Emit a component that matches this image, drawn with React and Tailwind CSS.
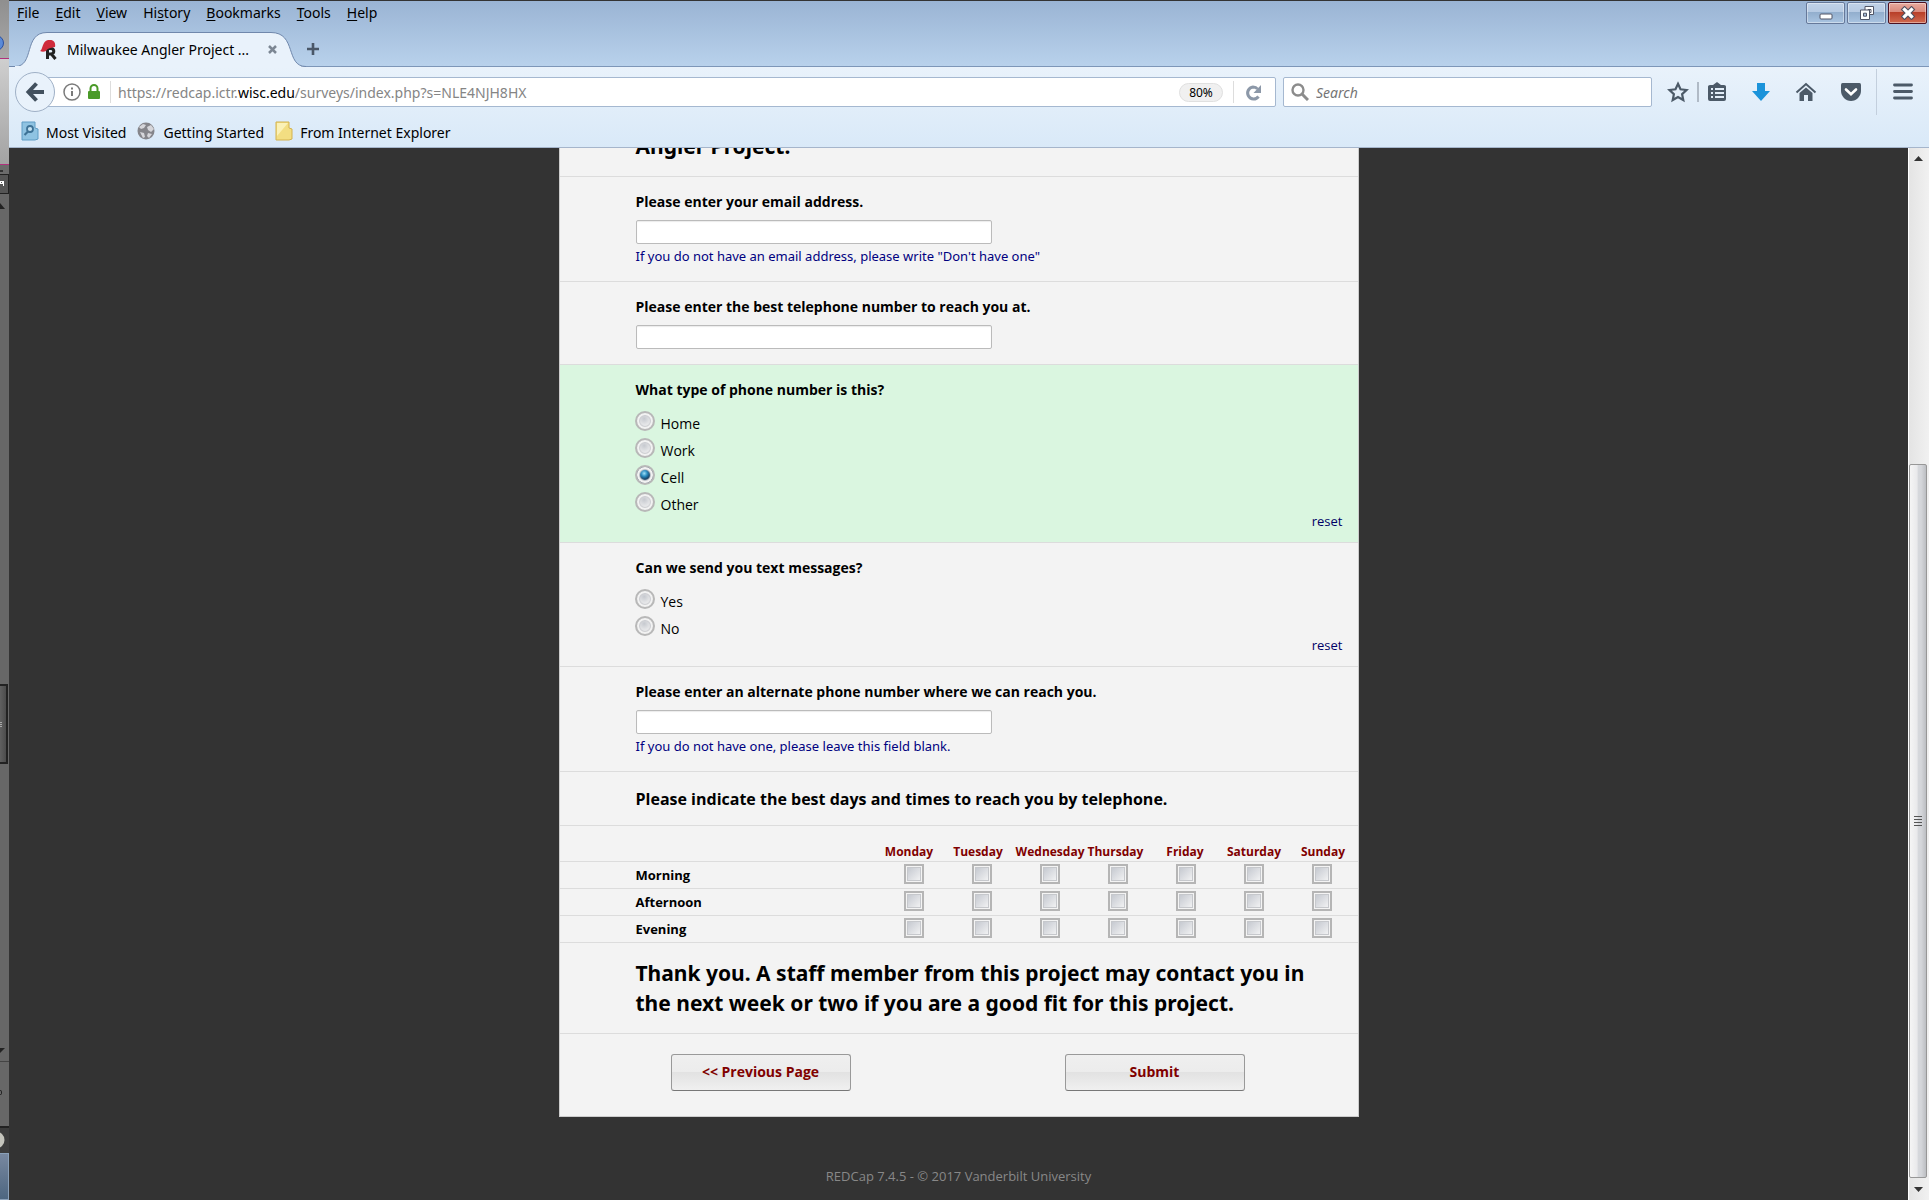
import React, { useState } from "react";

const MENU = ["File", "Edit", "View", "History", "Bookmarks", "Tools", "Help"];
const KEYS = [0, 0, 0, 2, 0, 0, 0];
const DAYS = ["Monday", "Tuesday", "Wednesday", "Thursday", "Friday", "Saturday", "Sunday"];
const HEAD_CELL = { Wednesday: "w-[72px] text-right", Thursday: "w-[66px] pl-[3px] text-left" };
const TIMES = ["Morning", "Afternoon", "Evening"];

const LINE = "border-b border-[#dcdcdc]";

function DesktopEdge() {
  return (
    <div aria-hidden="true" className="flex w-[9px] shrink-0 flex-col overflow-hidden bg-[#676767]">
      <div className="relative h-[58px] shrink-0 bg-gradient-to-b from-[#8f8f8f] to-[#a8a8a8]">
        <span className="absolute -left-3 top-[35px] size-4 rounded-full border border-[#2c50a0] bg-[#5a8ad8]" />
      </div>
      <div className="h-[107px] shrink-0 border-y border-[#b0307c] bg-gradient-to-b from-[#cfcfcf] to-[#a3a3a3]" />
      <div className="h-[9px] shrink-0 bg-[#6b6b6b] pt-[5px]"><div className="h-[2px] w-[3px] bg-[#333]" /></div>
      <div className="h-5 shrink-0 border border-l-0 border-[#222] bg-[#555] pt-[6px]">
        <svg width="5" height="6" viewBox="0 0 5 6"><path d="M0 0h4v5H3V3H0zM1 1v1h1V1z" fill="#fff" /></svg>
      </div>
      <svg className="mt-[9px] shrink-0" width="9" height="6" viewBox="0 0 9 6"><path d="M0 0L5 6H0z" fill="#222" /></svg>
      <div className="flex-1" />
      <div className="flex h-20 w-2 shrink-0 flex-col justify-center gap-px border-y-2 border-r-2 border-[#222] bg-gradient-to-r from-[#606060] to-[#4c4c4c]">
        <i className="h-px w-[2px] bg-[#aaa]" /><i className="h-px w-[2px] bg-[#aaa]" /><i className="h-px w-[2px] bg-[#aaa]" />
      </div>
      <div className="h-[284px] shrink-0" />
      <svg className="shrink-0" width="9" height="13" viewBox="0 0 9 13"><path d="M0 0H5L0 5z" fill="#222" /></svg>
      <div className="h-[65px] shrink-0 border-t border-[#444] pt-7"><div className="h-[5px] w-[2px] rounded-r border border-l-0 border-[#222]" /></div>
      <div className="h-[27px] shrink-0 border-t-2 border-[#222] bg-[#3c3c3c] pt-[3px]">
        <svg width="9" height="18" viewBox="0 0 9 18"><circle cx="-4" cy="9" r="8.500" fill="#c4c4bc" /></svg>
      </div>
      <div className="h-[47px] shrink-0 border border-l-0 border-[#8aa0b8] bg-gradient-to-b from-[#7888a0] to-[#4d6680]" />
    </div>
  );
}

function WindowButtons() {
  const base = "flex h-[22px] w-[39px] items-center justify-center rounded-[2px] border shadow-[inset_0_0_0_1px_rgba(255,255,255,0.4)]";
  const blue = base + " border-[#66799a] bg-[linear-gradient(#c0d2e8_0%,#b6cae3_45%,#92aecd_46%,#a9c4e1_100%)]";
  return (
    <div className="flex gap-[2px] pr-[2px] pt-px">
      <button aria-label="Minimize" className={blue}>
        <svg width="14" height="7" viewBox="0 0 14 7" className="mt-[7px]"><rect x="1" y="1" width="12" height="5" rx="1" fill="#fff" stroke="#505566" /></svg>
      </button>
      <button aria-label="Restore" className={blue}>
        <svg width="16" height="16" viewBox="0 0 16 16" fill="none">
          <path d="M6 1.500h8.500v8H6z" fill="#fff" stroke="#505566" /><path d="M9 4.500h3v3H9z" stroke="#505566" />
          <path d="M1.500 5h9v9.500h-9z" fill="#fff" stroke="#505566" /><path d="M4.500 8.200h3v3h-3z" fill="#a9c0dc" stroke="#505566" />
        </svg>
      </button>
      <button aria-label="Close window" className={base + " border-[#4d1020] bg-[linear-gradient(#e8aa9e_0%,#d9887a_45%,#b83e28_46%,#d06a50_100%)]"}>
        <svg width="16" height="14" viewBox="0 0 16 14"><path d="M4.500 3.500l7 7M11.500 3.500l-7 7" stroke="#50505e" strokeWidth="5.400" strokeLinecap="square" /><path d="M4.500 3.500l7 7M11.500 3.500l-7 7" stroke="#fff" strokeWidth="3.200" strokeLinecap="square" /></svg>
      </button>
    </div>
  );
}

function MenuBar() {
  return (
    <div className="flex h-[30px] items-start justify-between">
      <nav className="flex gap-4 pl-2 text-[14px] leading-[23px]">
        {MENU.map((m, i) => (
          <button key={m}>
            {m.slice(0, KEYS[i])}<span className="underline underline-offset-2">{m[KEYS[i]]}</span>{m.slice(KEYS[i] + 1)}
          </button>
        ))}
      </nav>
      <WindowButtons />
    </div>
  );
}

function TabStrip() {
  return (
    <div className="flex h-9 items-stretch shadow-[inset_0_-1px_0_#7d96b8]">
      <div className="relative flex w-[297px] items-center gap-[9px] pl-[31px] pr-[29px] pt-px">
        <svg className="absolute inset-0" width="297" height="36" viewBox="0 0 297 36" aria-hidden="true">
          <path d="M0 35.500H6C26 35.500 14 1.500 38 1.500H262C288 1.500 276 35.500 297 35.500" fill="#e9f2fb" stroke="#7088ac" />
          <path d="M6 36H292" stroke="#e9f2fb" strokeWidth="2" />
        </svg>
        <svg className="relative shrink-0" width="18" height="20" viewBox="0 0 18 20">
          <path d="M6.500 8.500h5a2.800 2.800 0 010 5.500H6.500M7.500 7v12M11 13.500l4.500 5.500" fill="none" stroke="#222" strokeWidth="3" />
          <path d="M0 11C3 10 2 1 8 0c5-1 8 2 7 7-5 1-7 1-9 4-2 1-4 1-6 0z" fill="#cf2b3c" />
        </svg>
        <span className="relative flex-1 whitespace-nowrap text-[14px]">Milwaukee Angler Project ...</span>
        <button aria-label="Close tab" className="relative">
          <svg width="9" height="9" viewBox="0 0 9 9"><path d="M1 1l7 7M8 1L1 8" stroke="#7c8794" strokeWidth="2.500" /></svg>
        </button>
      </div>
      <button aria-label="New tab">
        <svg width="14" height="14" viewBox="0 0 14 14"><path d="M7 1v12M1 7h12" stroke="#4a5768" strokeWidth="2.600" /></svg>
      </button>
    </div>
  );
}

function ToolIcons() {
  return (
    <div className="flex items-center text-[#4c5a68]">
      <button aria-label="Bookmark this page" className="ml-[15px]">
        <svg width="22" height="22" viewBox="0 0 22 22"><path d="M11 2.800l2.500 5.500 6 .7-4.400 4.100 1.200 5.900L11 16l-5.300 3 1.200-5.900L2.500 9l6-.7z" fill="none" stroke="currentColor" strokeWidth="2.200" /></svg>
      </button>
      <span className="ml-2 h-5 w-[2px] bg-[#b0bac6]" />
      <button aria-label="Bookmarks list" className="ml-[7px]">
        <svg width="22" height="22" viewBox="0 0 22 22"><path d="M2 5.500Q2 4 4 4h3l4-3 4 3h3q2 0 2 1.500V18q0 2-2 2H4q-2 0-2-2z" fill="currentColor" /><path d="M5 8h2M9 8h9M5 12h2M9 12h9M5 16h2M9 16h9" stroke="#e3eef9" strokeWidth="2" /></svg>
      </button>
      <button aria-label="Downloads" className="ml-[22px]">
        <svg width="22" height="22" viewBox="0 0 22 22"><path d="M7 2h8v8h5l-9 10L2 10h5z" fill="#1b93da" /></svg>
      </button>
      <button aria-label="Home" className="ml-[23px]">
        <svg width="22" height="22" viewBox="0 0 22 22"><path d="M1.500 11.500L11 3l9.500 8.500" fill="none" stroke="currentColor" strokeWidth="2" /><path d="M11 6.500l6.500 5.500v8H13v-6H9v6H4.500v-8z" fill="currentColor" /></svg>
      </button>
      <button aria-label="Save to Pocket" className="ml-[22px]">
        <svg width="24" height="22" viewBox="0 0 24 22"><path d="M3.500 2h17Q22 2 22 4v6c0 5-4.500 10-10 10S2 15 2 10V4q0-2 1.500-2z" fill="currentColor" /><path d="M7 8.500l5 4.800 5-4.800" fill="none" stroke="#fff" strokeWidth="2.600" strokeLinecap="round" /></svg>
      </button>
      <span className="ml-[13px] h-[46px] w-px bg-[#c3cfdd]" />
      <button aria-label="Open menu" className="ml-4 mr-4">
        <svg width="20" height="20" viewBox="0 0 20 20"><path d="M1.500 3h17M1.500 9.500h17M1.500 16h17" stroke="currentColor" strokeWidth="2.800" strokeLinecap="round" /></svg>
      </button>
    </div>
  );
}

function NavBar() {
  return (
    <div className="flex h-[50px] items-center pl-1.5">
      <button aria-label="Back" className="z-10 flex size-10 shrink-0 items-center justify-center rounded-full border border-[#9fb0c6] bg-[#e9f2fb]">
        <svg width="20" height="20" viewBox="0 0 20 20"><path d="M19 10H4M11.500 1.500L3.500 10l8 8.500" fill="none" stroke="#42505e" strokeWidth="4" /></svg>
      </button>
      <div className="-ml-2 flex h-[30px] min-w-0 flex-1 items-center rounded-r-[2px] border border-[#a5b8d0] bg-white pl-[15px]">
        <svg width="18" height="18" viewBox="0 0 18 18"><circle cx="9" cy="9" r="8" fill="none" stroke="#7a7a7a" strokeWidth="1.500" /><path d="M9 8v5M9 4.500v2" stroke="#7a7a7a" strokeWidth="2" /></svg>
        <svg className="ml-[6px]" width="14" height="16" viewBox="0 0 14 16"><path d="M3.500 8V4.500a3.500 3.500 0 017 0V8" fill="none" stroke="#4a9a28" strokeWidth="2" /><rect x="1" y="7" width="12" height="8" rx="1" fill="#4a9a28" /></svg>
        <span className="ml-[9px] h-[22px] w-px bg-[#ddd]" />
        <a href="#address" className="ml-[7px] flex-1 pt-px text-[14px] text-[#858585]">https://redcap.ictr.<span className="text-black">wisc.edu</span>/surveys/index.php?s=NLE4NJH8HX</a>
        <button className="h-[19px] w-11 rounded-full border border-[#e0e0e0] bg-[#f0f0f0] text-[12px] leading-[17px]">80%</button>
        <span className="ml-[10px] h-[22px] w-px bg-[#ddd]" />
        <button aria-label="Reload" className="ml-[11px] mr-[13px]">
          <svg width="17" height="17" viewBox="0 0 17 17"><path d="M13.500 12.500A6 6 0 118 3c2 0 3.500.6 4.500 2" fill="none" stroke="#8c98a8" strokeWidth="3" /><path d="M16 1v8H8.500z" fill="#8c98a8" /></svg>
        </button>
      </div>
      <div className="ml-[7px] flex h-[30px] w-[369px] shrink-0 items-center gap-[7px] rounded-[2px] border border-[#a5b8d0] bg-white pl-[7px]">
        <svg width="18" height="18" viewBox="0 0 18 18"><circle cx="7" cy="7" r="5.500" fill="none" stroke="#8c8c8c" strokeWidth="2.400" /><path d="M11 11l6 6" stroke="#8c8c8c" strokeWidth="3" /></svg>
        <input aria-label="Search" placeholder="Search" className="min-w-0 flex-1 pt-px text-[14px] italic outline-none placeholder:text-[#757575]" />
      </div>
      <ToolIcons />
    </div>
  );
}

function BookmarksBar() {
  return (
    <nav className="flex h-[31px] items-center gap-[11px] border-b border-[#a5b5cb] pl-3 pt-px text-[14px]">
      <a href="#most" className="flex items-center gap-[7px]">
        <svg width="18" height="20" viewBox="0 0 18 20" className="-mt-[3px]"><path d="M1 1h13v6l3 1v10l-3 1H1z" fill="#8fc3e2" stroke="#5f9cc4" /><circle cx="9" cy="8" r="3" fill="#c4e2f3" stroke="#3d7296" strokeWidth="1.800" /><path d="M7 10.500L3.500 14" stroke="#3d7296" strokeWidth="2.200" /></svg>
        Most Visited
      </a>
      <a href="#start" className="flex items-center gap-2">
        <svg width="18" height="18" viewBox="0 0 18 18" className="-mt-[3px]"><circle cx="9" cy="9" r="8.500" fill="#85858a" /><path d="M2 5l4-3 3 1-2 3-3 1zM10 5l4-2 3 4-3 3-3-2zM3 10l4 1 1 4-2 1zM11 11l4 1-3 4-2-2z" fill="#d6d6da" /></svg>
        Getting Started
      </a>
      <a href="#ie" className="flex items-center gap-[7px]">
        <svg width="18" height="20" viewBox="0 0 18 20" className="-mt-[3px]"><path d="M1 1h13v6l3 1v10l-3 1H1z" fill="#f3de82" stroke="#d3b24e" /><path d="M2 2h11L2 15z" fill="#fbf1b6" /></svg>
        From Internet Explorer
      </a>
    </nav>
  );
}

function Chrome() {
  return (
    <header className="shrink-0 border-t border-[#333] font-['Noto_Sans',sans-serif]">
      <div className="bg-gradient-to-b from-[#9ab4d4] to-[#b9d2ec]">
        <MenuBar />
        <TabStrip />
      </div>
      <div className="bg-gradient-to-b from-[#e9f2fb] to-[#d9e9f8]">
        <NavBar />
        <BookmarksBar />
      </div>
    </header>
  );
}

function Section({ children, className = "" }) {
  return <section className={"pl-[76px] pr-[15px] pt-[15px] " + LINE + " " + className}>{children}</section>;
}

function TextField({ id, label, hint }) {
  return (
    <Section className="pb-[15px]">
      <label htmlFor={id} className="block text-[14px] font-bold leading-5">{label}</label>
      <input id={id} className="mt-2 block h-6 w-[356px] rounded-[2px] border border-[#bbb] bg-white px-1 text-[14px] shadow-[inset_0_1px_1px_rgba(0,0,0,0.08)]" />
      {hint && <p className="mt-[2px] font-['Noto_Sans',sans-serif] text-[13px] leading-5 text-[#000080]">{hint}</p>}
    </Section>
  );
}

const RADIO =
  "size-5 shrink-0 appearance-none rounded-full border-2 border-[#b8b8b8] bg-[radial-gradient(circle_at_45%_35%,#c6c9cf_0,#f4f4f4_9px)] shadow-[inset_0_0_0_2px_#f2f2f2,inset_0_0_1px_3px_#cbccd0] checked:bg-[radial-gradient(circle_at_45%_40%,#9fe0f8_0,#2a8cc0_3px,#123c60_6px)]";

function RadioField({ name, label, options, initial, className = "" }) {
  const [value, setValue] = useState(initial);
  return (
    <Section className={"pb-[11px] " + className}>
      <fieldset>
        <legend className="text-[14px] font-bold leading-5">{label}</legend>
        <div className="mt-2 flex items-end justify-between">
          <div className="pb-[15px]">
            {options.map((o) => (
              <label key={o} className="flex h-[27px] items-start gap-[6px] text-[14px] leading-5">
                <input type="radio" name={name} checked={value === o} onChange={() => setValue(o)} className={"-ml-px mt-[3px] " + RADIO} />
                <span className="pt-[6px]">{o}</span>
              </label>
            ))}
          </div>
          <button type="button" onClick={() => setValue(null)} className="text-[13px] leading-5 text-[#000066]">reset</button>
        </div>
      </fieldset>
    </Section>
  );
}

function Availability() {
  return (
    <table className="block text-[12px] font-bold leading-[18px]">
      <thead className="block">
        <tr className={"flex h-9 items-end justify-end " + LINE}>
          {DAYS.map((d) => (
            <th key={d} scope="col" className={"whitespace-nowrap text-[#800000] " + (HEAD_CELL[d] || "w-[69px] text-center")}>{d}</th>
          ))}
        </tr>
      </thead>
      <tbody className="block">
        {TIMES.map((t) => (
          <tr key={t} className={"flex h-[27px] items-center pl-[76px] pr-[2px] " + LINE}>
            <th scope="row" className="flex-1 text-left text-[13px]">{t}</th>
            {DAYS.map((d) => (
              <td key={d} className="flex w-[68px] justify-center pb-[2px]">
                <input type="checkbox" aria-label={t + " " + d} className="size-5 appearance-none border-2 border-[#b5b5b5] bg-gradient-to-br from-[#bfc3cb] to-[#f8f8f8] shadow-[inset_0_0_0_1px_#f4f4f4,inset_0_0_0_2px_#c6c8cc] checked:bg-[#2a8cc0]" />
              </td>
            ))}
          </tr>
        ))}
      </tbody>
    </table>
  );
}

const BUTTON =
  "h-[37px] w-[180px] rounded-[3px] border border-[#999] border-b-[#777] bg-[linear-gradient(#efefef_0%,#ececec_49%,#e2e2e2_50%,#f0f0f0_100%)] pb-[2px] text-[14px] font-bold text-[#800000]";

const TITLE = "font-['Noto_Sans',sans-serif] text-[21px] font-bold leading-[30px]";

function Survey() {
  return (
    <main className="min-w-0 flex-1 overflow-hidden">
      <form onSubmit={(e) => e.preventDefault()} className="mx-auto max-w-[800px] border border-t-0 border-[#ccc] bg-[#f3f3f3]">
        <div className={"flex h-[29px] items-end overflow-hidden pb-[15px] pl-[76px] " + LINE}>
          <h1 className={TITLE}>Angler Project.</h1>
        </div>
        <TextField id="email" label="Please enter your email address." hint={'If you do not have an email address, please write "Don\'t have one"'} />
        <TextField id="phone" label="Please enter the best telephone number to reach you at." />
        <RadioField name="type" label="What type of phone number is this?" options={["Home", "Work", "Cell", "Other"]} initial="Cell" className="bg-[#daf6e0]" />
        <RadioField name="sms" label="Can we send you text messages?" options={["Yes", "No"]} initial={null} />
        <TextField id="alt" label="Please enter an alternate phone number where we can reach you." hint="If you do not have one, please leave this field blank." />
        <Section className="pb-[13px]">
          <h2 className="text-[16px] font-bold leading-[25px]">Please indicate the best days and times to reach you by telephone.</h2>
        </Section>
        <Availability />
        <Section className="pb-[15px]">
          <p className={TITLE}>Thank you. A staff member from this project may contact you in the next week or two if you are a good fit for this project.</p>
        </Section>
        <div className="flex justify-between pb-[25px] pl-[111px] pr-[113px] pt-5">
          <button type="button" className={BUTTON}>&lt;&lt; Previous Page</button>
          <button type="submit" className={BUTTON}>Submit</button>
        </div>
      </form>
      <footer className="mt-12 text-center text-[13px] leading-[22px] text-[#888]">REDCap 7.4.5 - © 2017 Vanderbilt University</footer>
    </main>
  );
}

function ScrollBar() {
  return (
    <div aria-hidden="true" className="flex w-[21px] shrink-0 flex-col items-center border-l border-white bg-gradient-to-r from-[#e4e4e4] to-[#f1f1f1] pr-[2px]">
      <svg className="mt-2 shrink-0" width="9" height="5" viewBox="0 0 9 5"><path d="M4.500 0L9 5H0z" fill="#333" /></svg>
      <div className="flex-[303]" />
      <div className="flex w-[18px] flex-[713] flex-col items-center justify-center gap-[2px] rounded-[2px] border border-[#979797] bg-[linear-gradient(90deg,#f5f5f5_0%,#e9e9eb_45%,#d6d8dc_50%,#d4d6da_70%,#bcbec2_100%)]">
        <i className="h-px w-2 bg-[#555]" /><i className="h-px w-2 bg-[#555]" /><i className="h-px w-2 bg-[#555]" /><i className="h-px w-2 bg-[#555]" />
      </div>
      <svg className="mb-[8px] mt-[9px] shrink-0" width="9" height="5" viewBox="0 0 9 5"><path d="M0 0h9L4.500 5z" fill="#333" /></svg>
    </div>
  );
}

export default function App() {
  return (
    <div className="flex h-screen overflow-hidden bg-[#333] font-['Open_Sans',sans-serif] text-black">
      <DesktopEdge />
      <div className="flex min-w-0 flex-1 flex-col">
        <Chrome />
        <div className="flex min-h-0 flex-1">
          <Survey />
          <ScrollBar />
        </div>
      </div>
    </div>
  );
}
